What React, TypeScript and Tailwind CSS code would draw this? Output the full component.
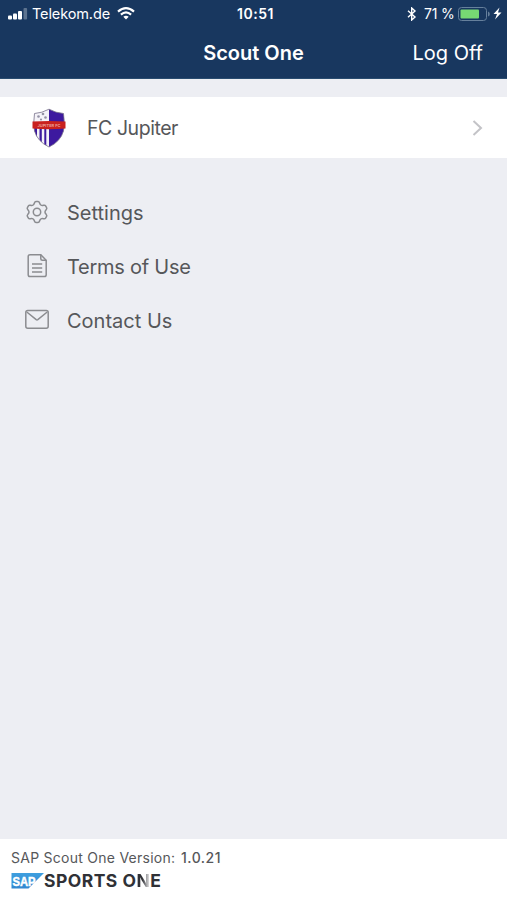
import React from "react";

const TOOTH =
  "M-4-6.9C-3-7.48-2.9-7.9-2.5-9.2Q-2.1-10.5-1-10.5H1Q2.1-10.5 2.5-9.2C2.9-7.9 3-7.48 4-6.9";

function GearIcon() {
  return (
    <svg width="24" height="24" viewBox="-12 -12 24 24" fill="none" stroke="#8b8c90" strokeWidth="1.5">
      {[0, 60, 120, 180, 240, 300].map((a) => (
        <path key={a} d={TOOTH} transform={`rotate(${a})`} />
      ))}
      <circle r="3.7" />
    </svg>
  );
}

function DocumentIcon() {
  return (
    <svg width="24" height="24" viewBox="0 0 24 24" fill="none" stroke="#8b8c90" strokeWidth="1.5">
      <path d="M5 .8H15.8L21.2 6.2V20.8Q21.2 22.6 19.4 22.6H5Q3.200 22.600 3.200 20.800V2.600Q3.200.8 5 .8Z" />
      <path d="M15.800.8V4.700Q15.800 6.200 17.300 6.200H21.200" />
      <path d="M7 10H17.200M7 14H17.200M7 18H17.200" />
    </svg>
  );
}

function MailIcon() {
  return (
    <svg width="24" height="24" viewBox="0 0 24 24" fill="none" stroke="#8b8c90" strokeWidth="1.5">
      <rect x=".8" y="2.500" width="22.400" height="17.800" rx="2" />
      <path d="M1.800 4L11.200 11.700Q12 12.300 12.800 11.700L22.200 4" />
    </svg>
  );
}

function Crest() {
  return (
    <svg width="34" height="40" viewBox="0 0 34 40">
      <defs>
        <clipPath id="shield">
          <path d="M17 1.200Q24 5 31.500 5.500Q33 15 31.500 23Q28.500 33.500 17 39Q5.500 33.500 2.500 23Q1 15 2.500 5.500Q10 5 17 1.200Z" />
        </clipPath>
      </defs>
      <g clipPath="url(#shield)">
        <path fill="#f4f2f8" d="M0 0H17V40H0Z" />
        <path fill="#3d199f" d="M17 0H34V40H17ZM2 19H5V40H2ZM7.500 19H9.800V40H7.500ZM12.300 19H14.300V40H12.300Z" />
        <g fill="#9492a5">
          <circle cx="11" cy="6" r="1.300" />
          <circle cx="6.500" cy="8.500" r="1.300" />
          <circle cx="13.500" cy="9.500" r="1.300" />
          <circle cx="9" cy="11.500" r="1.100" />
        </g>
      </g>
      <path d="M17 1.200Q24 5 31.500 5.500Q33 15 31.500 23Q28.500 33.500 17 39Q5.500 33.500 2.500 23Q1 15 2.500 5.500Q10 5 17 1.200Z" fill="none" stroke="#77718a" strokeWidth=".8" />
      <path fill="#c9211e" d="M.5 13.500Q17 12.500 33.500 13.500V20.500Q17 22 .5 20.500Z" />
      <text x="17" y="18.600" textAnchor="middle" fontSize="4" fontWeight="700" fill="#eba09a" fontFamily="Inter, sans-serif">JUPITER FC</text>
    </svg>
  );
}

function StatusBar() {
  return (
    <div className="grid h-[27px] grid-cols-[1fr_auto_1fr] items-center text-[14px] leading-[27px]">
      <div className="flex items-center pl-2">
        <svg width="20" height="12" viewBox="0 0 20 12" fill="#fff">
          <rect y="7.500" width="4" height="4" rx="1" />
          <rect x="5" y="5.500" width="4" height="6" rx="1" />
          <rect x="10" y="3" width="4" height="8.500" rx="1" />
          <rect x="15.500" y="0" width="3.600" height="11.500" rx="1" opacity=".3" />
        </svg>
        <span className="ml-1 w-[78px] whitespace-nowrap text-[14.500px] tracking-[-0.120px]">Telekom.de</span>
        <svg className="ml-[7px]" width="18" height="13" viewBox="0 0 18 13" fill="none" stroke="#fff" strokeWidth="2.200">
          <path d="M1 4.600Q9-2.300 17 4.600M3.900 7.600Q9 3.200 14.100 7.600" />
          <path d="M6.300 9.700Q9 7.600 11.700 9.700L9 12.500Z" fill="#fff" stroke="none" />
        </svg>
      </div>
      <span className="pl-[4px] text-[14px] font-semibold tracking-[0.550px]">10:51</span>
      <div className="flex items-center justify-end pr-[5px]">
        <svg width="10" height="14" viewBox="0 0 10 14" fill="none" stroke="#fff" strokeWidth="1.400">
          <path d="M1 3.700L8 10L4.700 13V1L8 4L1 10.300" />
        </svg>
        <span className="ml-[7px] w-[32px] whitespace-nowrap text-[14px] tracking-[-0.200px]">71 %</span>
        <svg className="ml-[2px]" width="33" height="14" viewBox="0 0 33 14">
          <rect x=".5" y=".5" width="28" height="13" rx="3" fill="none" stroke="#66809c" />
          <rect x="2.500" y="2.500" width="18.500" height="9" rx="1" fill="#76d873" />
          <path d="M30 4.500Q31.800 5 31.800 7T30 9.500Z" fill="#66809c" />
        </svg>
        <svg className="ml-[2px]" width="9" height="13" viewBox="0 0 9 13" fill="#fff">
          <path d="M6.500.5L.5 7H4L2 12.500L8.500 5.500H5Z" />
        </svg>
      </div>
    </div>
  );
}

function SapLogo() {
  return (
    <svg width="33" height="16" viewBox="0 0 33 16">
      <defs>
        <linearGradient id="sap" x1="0" y1="0" x2="0" y2="1">
          <stop offset="0" stopColor="#3e9fdf" />
          <stop offset="1" stopColor="#3187d0" />
        </linearGradient>
      </defs>
      <path d="M.5 0H33L17.500 15.500H.5Z" fill="url(#sap)" />
      <text x="1.500" y="12.600" fontSize="13" fontWeight="700" fill="#fff" stroke="#fff" strokeWidth=".5" textLength="23" lengthAdjust="spacingAndGlyphs" fontFamily="Liberation Sans, sans-serif">SAP</text>
    </svg>
  );
}

const items = [
  { label: "Settings", icon: <GearIcon />, cls: "tracking-[0px]" },
  { label: "Terms of Use", icon: <DocumentIcon />, cls: "tracking-[-0.250px]" },
  { label: "Contact Us", icon: <MailIcon />, cls: "tracking-[0px]" },
];

export default function App() {
  return (
    <div className="flex h-[900px] w-[507px] flex-col overflow-hidden bg-[#edeef3] font-['Inter',sans-serif] text-[#56575a]">
      <header className="h-[79px] shrink-0 border-b border-[#294c70] bg-[#18375f] text-white">
        <StatusBar />
        <div className="grid h-[51px] grid-cols-[1fr_auto_1fr] items-center text-[20px]">
          <span className="col-start-2 font-semibold">Scout One</span>
          <span className="justify-self-end pr-[24px]">Log Off</span>
        </div>
      </header>
      <div className="mt-[18px] flex h-[61px] shrink-0 items-center bg-white pr-[24px] pl-[32px] text-[19.500px]">
        <Crest />
        <span className="ml-[21px] pt-[2px] tracking-[-0.450px]">FC Jupiter</span>
        <svg className="ml-auto" width="11" height="16" viewBox="0 0 11 16" fill="none" stroke="#c3c3c7" strokeWidth="2">
          <path d="M1.500 1L9 8L1.500 15" />
        </svg>
      </div>
      <nav className="mt-[27px] flex flex-1 flex-col pl-[25px] text-[20px]">
        {items.map(({ label, icon, cls }) => (
          <div key={label} className="flex h-[54px] items-center gap-[18px]">
            {icon}
            <span className={`pt-[2px] ${cls}`}>{label}</span>
          </div>
        ))}
      </nav>
      <footer className="h-[61px] shrink-0 bg-white pt-[9px] pl-[11px]">
        <div className="flex text-[14px] leading-[20px]">
          <span className="w-[164px] whitespace-nowrap tracking-[0.260px]">SAP Scout One Version:</span>
          <span className="ml-[6px] font-medium tracking-[0.500px]">1.0.21</span>
        </div>
        <div className="mt-1 flex h-[18px] items-center">
          <SapLogo />
          <span className="whitespace-nowrap text-[17.500px] leading-[18px] font-bold tracking-[0.480px] text-[#303136]">
            SPORTS O<span className="bg-linear-to-r from-[#303136] from-45% to-[#b8b8ba] to-80% bg-clip-text text-transparent">N</span>E
          </span>
        </div>
      </footer>
    </div>
  );
}
